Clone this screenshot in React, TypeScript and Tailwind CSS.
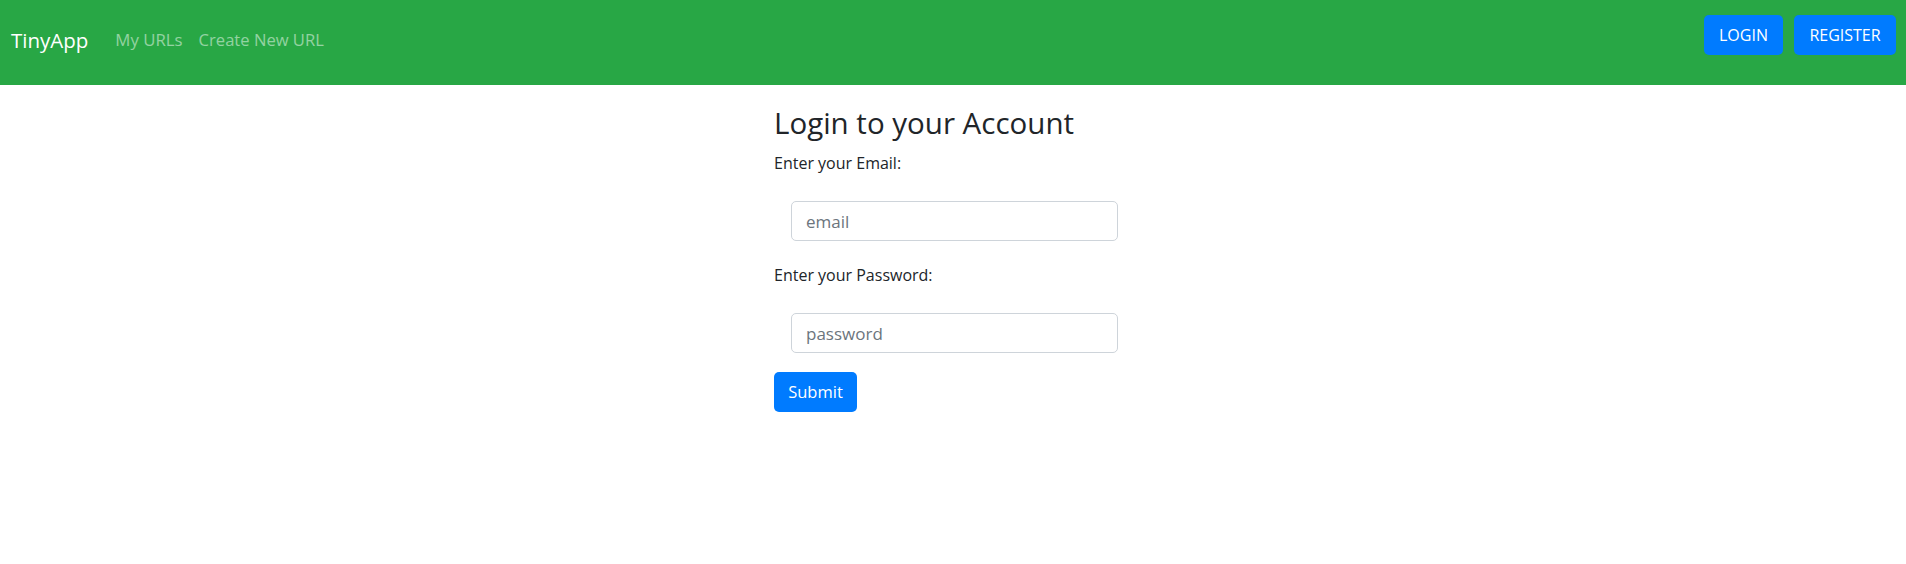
import { useState } from "react";

const font = "font-['Segoe_UI','Open_Sans','Noto_Sans',sans-serif]";

const Navbar = () => {
    return (
        <nav className="flex h-[85px] w-full items-start justify-between bg-[#28a745] pl-[11px] pr-[10px] pt-[15px]">
            <div className="flex items-center">
                <a href="#" className="mt-[10px] text-[20.5px] leading-[30px] text-white">TinyApp</a>
                <a href="#" className="ml-[27px] mt-[10px] text-[16.8px] leading-[30px] text-white/50">My URLs</a>
                <a href="#" className="ml-[16px] mt-[10px] text-[16.6px] leading-[30px] text-white/50">Create New URL</a>
            </div>
            <div className="flex gap-[11px]">
                <button className="h-[40px] w-[79px] rounded-[5px] bg-[#007bff] text-[16px] text-white">LOGIN</button>
                <button className="h-[40px] w-[102px] rounded-[5px] bg-[#007bff] text-[16px] text-white">REGISTER</button>
            </div>
        </nav>
    );
};

const LoginForm = () => {
    const [email, setEmail] = useState("");
    const [password, setPassword] = useState("");

    return (
        <form className="ml-[774px] flex w-[345px] flex-col pt-[20px]" onSubmit={(e) => e.preventDefault()}>
            <h3 className="text-[29.5px] leading-[35px] text-[#212529]">Login to your Account</h3>
            <label className="mt-[11px] text-[16px] leading-[25px] text-[#212529]">Enter your Email:</label>
            <input
                value={email}
                onChange={(e) => setEmail(e.target.value)}
                placeholder="email"
                className="ml-[17px] mt-[25px] h-[40px] w-[327px] rounded-[5px] border border-[#ced4da] px-[14px] text-[17px] text-[#495057] placeholder:text-[#6c757d] outline-none"
            />
            <label className="mt-[22px] text-[16px] leading-[25px] text-[#212529]">Enter your Password:</label>
            <input
                type="password"
                value={password}
                onChange={(e) => setPassword(e.target.value)}
                placeholder="password"
                className="ml-[17px] mt-[25px] h-[40px] w-[327px] rounded-[5px] border border-[#ced4da] px-[14px] text-[17px] text-[#495057] placeholder:text-[#6c757d] outline-none"
            />
            <button type="submit" className="mt-[19px] h-[40px] w-[83px] rounded-[5px] bg-[#007bff] text-[16.5px] text-white">Submit</button>
        </form>
    );
};

const App = () => {
    return (
        <div className={`min-h-[564px] w-full bg-white ${font}`}>
            <Navbar />
            <LoginForm />
        </div>
    );
};

export default App;
